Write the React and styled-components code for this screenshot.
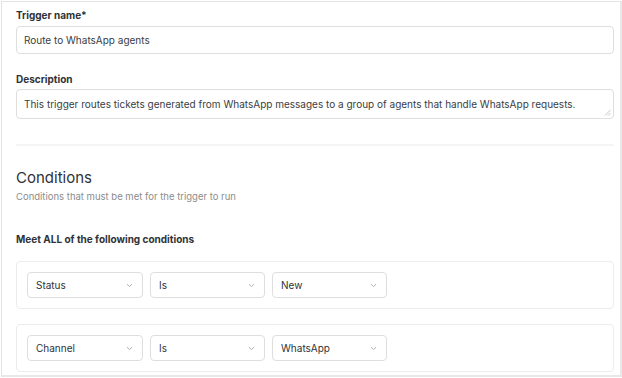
import React from "react";
import styled, { createGlobalStyle } from "styled-components";

const Global = createGlobalStyle`
  html, body { margin: 0; padding: 0; background: #fff; }
  body { padding: 1px; font-family: Inter, "Liberation Sans", Arial, sans-serif; color: #2f3237; }
  * { box-sizing: border-box; }
`;

const Frame = styled.div`
  width: 621px;
  height: 376px;
  border: 1px solid #e4e4e4;
  border-right: 2px solid #e8e8e8;
  border-bottom: 2px solid #e8e8e8;
  padding: 6px 6px 0 14px;
  overflow: hidden;
`;

const Field = styled.div`
  display: flex;
  flex-direction: column;
  margin-bottom: ${(p) => p.$mb || 0}px;
`;

const Label = styled.label`
  font-size: 10px;
  font-weight: 700;
  line-height: 14px;
  color: #2f3237;
  margin-bottom: ${(p) => p.$mb || 4}px;
`;

const TextBox = styled.div`
  position: relative;
  height: ${(p) => p.$h}px;
  border: 1px solid #dedede;
  border-radius: 4px;
  padding: 0 7px;
  display: flex;
  align-items: center;
  font-size: 10px;
  color: #3a3d42;
`;

const Grip = styled.svg`
  position: absolute;
  right: 2px;
  bottom: 2px;
`;

const Divider = styled.hr`
  border: 0;
  height: 2px;
  background: #f4f4f4;
  margin: 25px 0 0;
`;

const Heading = styled.h2`
  margin: 23px 0 0;
  font-size: 15px;
  font-weight: 400;
  line-height: 18px;
  color: #2f3237;
`;

const Sub = styled.p`
  margin: 3px 0 0;
  font-size: 9.5px;
  line-height: 14px;
  color: #8c8c8c;
`;

const Meet = styled.p`
  margin: 28px 0 0;
  font-size: 10px;
  font-weight: 700;
  line-height: 14px;
  color: #2f3237;
`;

const Cards = styled.div`
  display: flex;
  flex-direction: column;
  gap: 15px;
  margin-top: 15px;
`;

const Card = styled.div`
  height: 48px;
  border: 1px solid #ececec;
  border-radius: 4px;
  padding: 0 10px;
  display: flex;
  align-items: center;
  gap: 7px;
`;

const Select = styled.div`
  width: ${(p) => p.$w}px;
  height: 26px;
  border: 1px solid #dedede;
  border-radius: 4px;
  padding: 0 9px 0 8px;
  display: flex;
  align-items: center;
  justify-content: space-between;
  font-size: 10px;
  color: #2f3237;
`;

const Chevron = () => (
  <svg width="7" height="5" viewBox="0 0 7 5">
    <polyline points="1,1.2 3.5,3.5 6,1.2" fill="none" stroke="#a8a8a8" strokeWidth="0.9" />
  </svg>
);

const conditions = [
  ["Status", "Is", "New"],
  ["Channel", "Is", "WhatsApp"],
];

export default function App() {
  return (
    <>
      <Global />
      <Frame>
        <Field $mb={18}>
          <Label $mb={4}>Trigger name*</Label>
          <TextBox $h={28}>Route to WhatsApp agents</TextBox>
        </Field>
        <Field>
          <Label $mb={3}>Description</Label>
          <TextBox $h={30}>
            This trigger routes tickets generated from WhatsApp messages to a group of agents that handle WhatsApp requests.
            <Grip width="7" height="7" viewBox="0 0 7 7">
              <line x1="1" y1="6.5" x2="6.5" y2="1" stroke="#b5b5b5" strokeWidth="0.8" />
              <line x1="4" y1="6.5" x2="6.5" y2="4" stroke="#b5b5b5" strokeWidth="0.8" />
            </Grip>
          </TextBox>
        </Field>
        <Divider />
        <Heading>Conditions</Heading>
        <Sub>Conditions that must be met for the trigger to run</Sub>
        <Meet>Meet ALL of the following conditions</Meet>
        <Cards>
          {conditions.map((c, i) => (
            <Card key={i}>
              <Select $w={116}>{c[0]}<Chevron /></Select>
              <Select $w={115}>{c[1]}<Chevron /></Select>
              <Select $w={115}>{c[2]}<Chevron /></Select>
            </Card>
          ))}
        </Cards>
      </Frame>
    </>
  );
}
